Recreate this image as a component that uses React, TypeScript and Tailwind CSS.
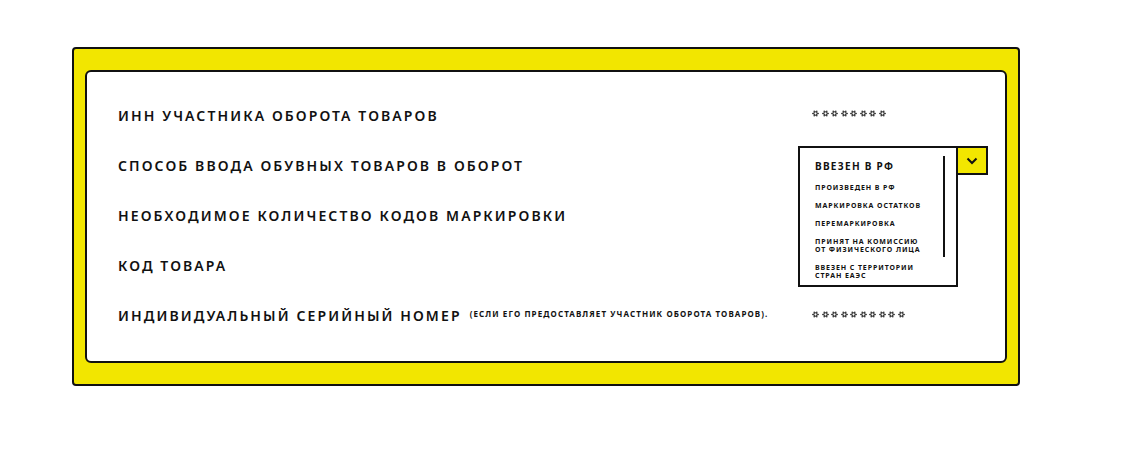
const Dots = ({ count }: { count: number }) => (
  <div className="flex gap-[2.5px]">
    {Array.from({ length: count }).map((_, i) => (
      <svg key={i} width="7" height="7" viewBox="0 0 14 14">
        <circle cx="7" cy="7" r="3.4" fill="none" stroke="#222" strokeWidth="2.2" />
        {[0, 60, 120, 180, 240, 300].map((a) => (
          <circle
            key={a}
            cx={7 + 5.2 * Math.cos((a * Math.PI) / 180)}
            cy={7 + 5.2 * Math.sin((a * Math.PI) / 180)}
            r="1.5"
            fill="#222"
          />
        ))}
      </svg>
    ))}
  </div>
);

const options = [
  ["ПРОИЗВЕДЕН В РФ"],
  ["МАРКИРОВКА ОСТАТКОВ"],
  ["ПЕРЕМАРКИРОВКА"],
  ["ПРИНЯТ НА КОМИССИЮ", "ОТ ФИЗИЧЕСКОГО ЛИЦА"],
  ["ВВЕЗЕН С ТЕРРИТОРИИ", "СТРАН ЕАЭС"],
];

const Select = () => (
  <div className="absolute left-0 top-[6px] flex items-start">
    <div className="flex h-[141px] w-[160px] border-2 border-[#111] bg-white">
      <div className="flex-1 pl-[15px] pt-[12px]">
        <div className="text-[10px] font-bold leading-[12px] tracking-[1.3px]">
          ВВЕЗЕН В РФ
        </div>
        <ul className="mt-[12px] flex flex-col gap-[10px]">
          {options.map((o) => (
            <li key={o[0]} className="text-[7px] font-bold leading-[8px] tracking-[0.9px]">
              {o.map((line) => (
                <div key={line}>{line}</div>
              ))}
            </li>
          ))}
        </ul>
      </div>
      <div className="mr-[11px] mt-[8px] h-[101px] w-[2px] bg-[#111]" />
    </div>
    <div className="-ml-[2px] flex h-[29px] w-[32px] items-center justify-center border-2 border-[#111] bg-[#f2e600]">
      <svg width="12" height="8" viewBox="0 0 12 8">
        <path d="M1.5 1.5 L6 6 L10.5 1.5" fill="none" stroke="#111" strokeWidth="2" />
      </svg>
    </div>
  </div>
);

const rows = [
  "ИНН УЧАСТНИКА ОБОРОТА ТОВАРОВ",
  "СПОСОБ ВВОДА ОБУВНЫХ ТОВАРОВ В ОБОРОТ",
  "НЕОБХОДИМОЕ КОЛИЧЕСТВО КОДОВ МАРКИРОВКИ",
  "КОД ТОВАРА",
  "ИНДИВИДУАЛЬНЫЙ СЕРИЙНЫЙ НОМЕР",
];

const App = () => {
  return (
    <div
      className="h-[449px] w-[1127px] bg-white pl-[72px] pt-[47px] text-[#111]"
      style={{ fontFamily: '"Noto Sans", "Open Sans", sans-serif' }}
    >
      <div className="h-[339px] w-[948px] rounded-[4px] border-2 border-[#111] bg-[#f2e600] px-[11px] py-[21px]">
        <div className="h-[293px] rounded-[6px] border-2 border-[#111] bg-white pl-[31px] pt-[18px]">
          {rows.map((r, i) => (
            <div key={r} className="flex h-[50px] items-center">
              <div className="flex w-[680px] items-center gap-[8px]">
                <span className="text-[14px] font-semibold tracking-[2.1px]">{r}</span>
                {i === 4 && (
                  <span className="-mt-[3px] text-[8px] font-bold tracking-[1.1px]">
                    (ЕСЛИ ЕГО ПРЕДОСТАВЛЯЕТ УЧАСТНИК ОБОРОТА ТОВАРОВ).
                  </span>
                )}
              </div>
              <div className="relative h-full flex-1">
                {i === 0 && (
                  <div className="mt-[20px] pl-[14px]">
                    <Dots count={8} />
                  </div>
                )}
                {i === 1 && <Select />}
                {i === 4 && (
                  <div className="mt-[21px] pl-[14px]">
                    <Dots count={10} />
                  </div>
                )}
              </div>
            </div>
          ))}
        </div>
      </div>
    </div>
  );
};

export default App;
